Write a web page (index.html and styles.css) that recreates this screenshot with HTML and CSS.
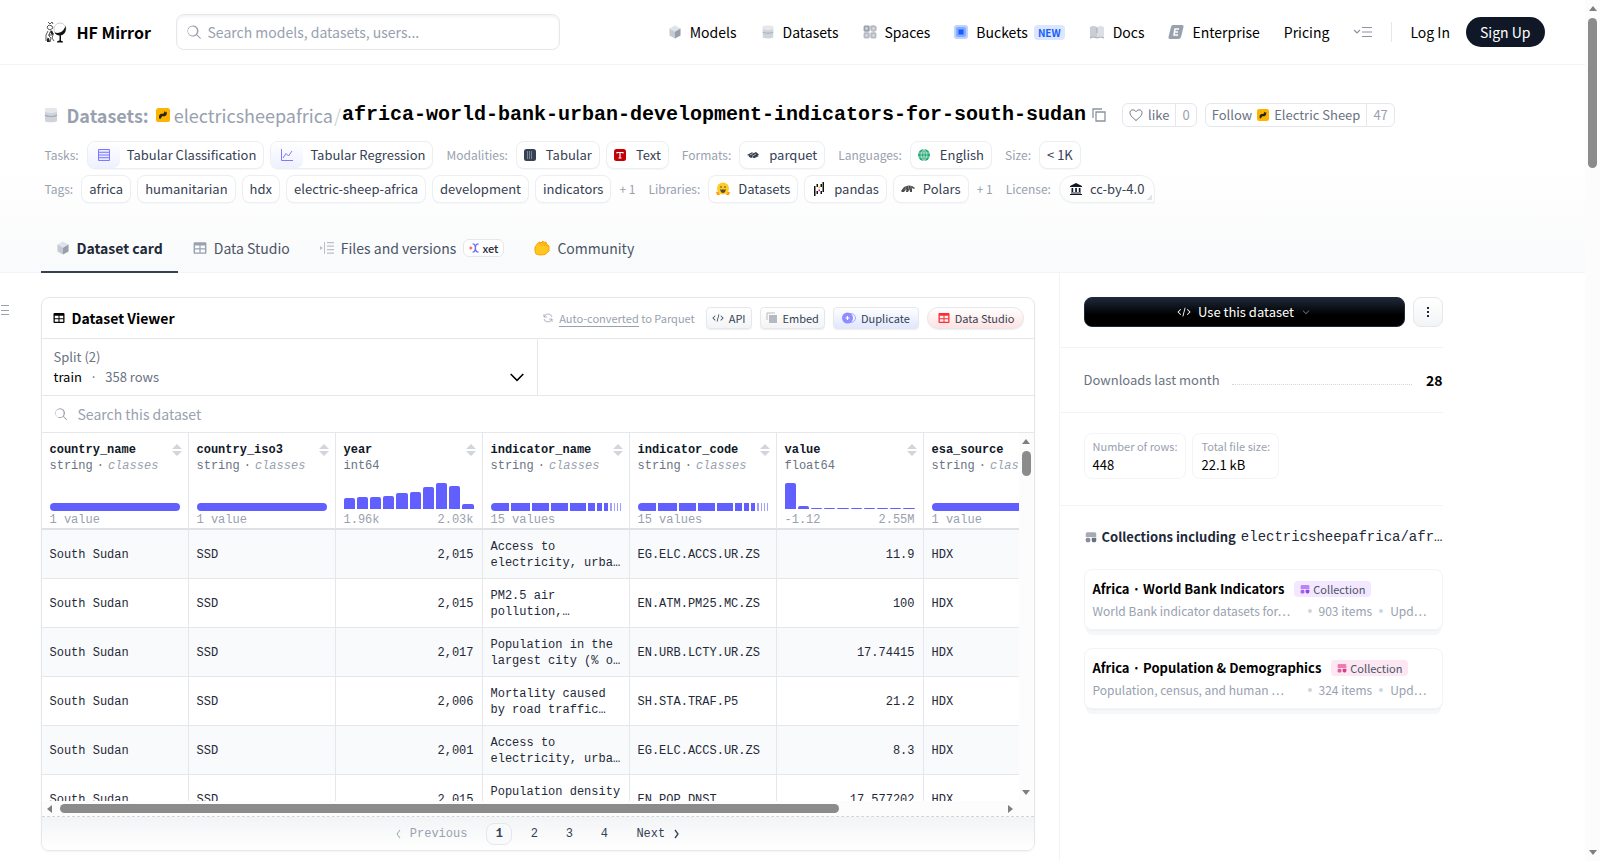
FILE: index.html
```
<!DOCTYPE html>
<html lang="en">
  <head>
    <meta charset="UTF-8" />
    <meta name="viewport" content="width=device-width, initial-scale=1.0" />
    <title>electricsheepafrica/africa-world-bank-urban-development-indicators-for-south-sudan</title>
    <link rel="stylesheet" href="styles.css">
  </head>
  <body>
    <svg class="sprite" aria-hidden="true">
      <symbol id="i-search" viewBox="0 0 32 32"><path d="M30 28.6 22.4 21a11 11 0 1 0-1.4 1.4l7.6 7.6ZM4 14a9 9 0 1 1 9 9 9 9 0 0 1-9-9Z" fill="currentColor" /></symbol>
      <symbol id="i-cube" viewBox="0 0 24 24"><path d="M12 1 21.500 6.200 12 11.600 2.500 6.200Z" fill="#dfe2e8" /><path d="M2.500 6.200 12 11.600V23L2.500 17.800Z" fill="#c5c9d1" /><path d="M21.500 6.200 12 11.600V23L21.500 17.800Z" fill="#979eac" /></symbol>
      <symbol id="i-db" viewBox="0 0 24 24"><path d="M3 3v18c0 1 4 2 9 2s9-1 9-2V3Z" fill="#cfd3da" /><path d="M3 7V3q0-2 9-2t9 2v4q-9 4-18 0Z" fill="#e5e7eb" /><path d="M3 12c3 3 15 3 18 0" fill="none" stroke="#a5abb7" stroke-width="1.800" /></symbol>
      <symbol id="i-spaces" viewBox="0 0 24 24"><rect x="1" y="1" width="10.500" height="10.500" rx="2.500" fill="#9aa1ae" /><circle cx="18" cy="6" r="5.500" fill="#b5bac4" /><rect x="12.500" y="1" width="5" height="5" fill="#b5bac4" /><rect x="1" y="12.500" width="10.500" height="10.500" rx="2.500" fill="#b5bac4" /><rect x="12.500" y="12.500" width="10.500" height="10.500" rx="2.500" fill="#b5bac4" /><path d="M4 4h4v4H4zM16 4h4v4h-4zM4 16h4v4H4zM16 16h4v4h-4z" fill="#d8dbe1" /></symbol>
      <symbol id="i-table" viewBox="0 0 24 24"><path d="M3 2h18a2 2 0 0 1 2 2v16a2 2 0 0 1-2 2H3a2 2 0 0 1-2-2V4a2 2 0 0 1 2-2ZM3.500 7.500v5H11v-5Zm9.500 0v5h7.500v-5Zm-9.500 7v5H11v-5Zm9.500 0v5h7.500v-5Z" fill="currentColor" fill-rule="evenodd" /></symbol>
      <symbol id="i-code" viewBox="0 0 32 32"><path d="m31 16-7 7-1.400-1.400L28.200 16l-5.600-5.600L24 9ZM1 16l7-7 1.400 1.400L3.800 16l5.600 5.600L8 23Zm11.400 9.500L17.600 6l2 .5-5.200 19.500Z" fill="currentColor" /></symbol>
      <symbol id="i-chev" viewBox="0 0 32 32"><path d="M16 23 5 12l1.800-1.800 9.200 9.200 9.200-9.200L27 12Z" fill="currentColor" /></symbol>
      <symbol id="i-sheep" viewBox="0 0 16 16"><rect width="16" height="16" rx="3" fill="#fbb400" /><path d="M3.500 12V8.500L5.500 6.500h3L10 3.500l1 1.500 1.500-1L12 8l-2 1.500h-3L5 12.500Z" fill="#2a2410" /></symbol>
      <symbol id="i-coll" viewBox="0 0 16 16"><path d="M1 3.500A2 2 0 0 1 3 1.500h10a2 2 0 0 1 2 2V8H1Z" fill="currentColor" opacity=".6" /><rect x="1" y="9" width="6" height="6" rx="2" fill="currentColor" opacity=".8" /><path d="M9 9h6v3.500a2.500 2.500 0 0 1-2.500 2.500h-1A2.500 2.500 0 0 1 9 12.500Z" fill="currentColor" /></symbol>
      <symbol id="i-sort" viewBox="0 0 10 12"><path d="M5 0 10 5H0ZM5 12 0 7h10Z" fill="#d1d5dc" /></symbol>
    </svg>

    <div class="window">
      <div class="page">
        <header class="topbar">
          <div class="topbar-inner">
            <a class="brand" href="#">
              <svg class="logo" viewBox="0 0 22 22"><path d="M3 1l2 2 2-2 1 2M2 6l2-2 3 1 1 2-3 2-2-1ZM3 10l-2 4v6M5 11l-1 4 2 2-1 4M7 10l1 4-1 3 2 3M3 14h4M2 17l2 1" fill="none" stroke="#444" stroke-width=".9" /><path d="m6 9 3 4-2 1-2-3ZM2 18l2-1 1 4H2Z" fill="#222" /><circle cx="15" cy="8" r="6" fill="#fff" stroke="#b5b5b5" stroke-width=".7" /><path d="M20.500 5c1.500 5-1.500 9.500-5.500 9.500-3 0-5-1.500-5.500-3 5 1.500 9-1 11-6.500ZM14.500 14h1.500v6h-1.500ZM12 20.500l3-1.500 3 1.500v1h-6Z" fill="#111" /></svg>
              HF Mirror
            </a>
            <form class="search">
              <svg class="ic16"><use href="#i-search" /></svg>
              <input type="text" aria-label="Search" placeholder="Search models, datasets, users..." />
            </form>
            <nav class="nav">
              <a href="#"><svg class="ic14"><use href="#i-cube" /></svg>Models</a>
              <a href="#"><svg class="ic14"><use href="#i-db" /></svg>Datasets</a>
              <a href="#"><svg class="ic14"><use href="#i-spaces" /></svg>Spaces</a>
              <a href="#"><svg class="ic14" viewBox="0 0 14 14"><rect width="14" height="14" rx="3" fill="#bfd3ff" /><rect x="2" y="2" width="10" height="10" rx="2" fill="#84aaff" /><rect x="5" y="5" width="4" height="4" fill="#155dfc" stroke="#155dfc" /></svg>Buckets <span class="new">NEW</span></a>
              <a href="#"><svg class="ic16" viewBox="0 0 16 16"><path d="M1 3q3.500-2 7 0v11q-3.500-2-7 0Z" fill="#c9cdd4" /><path d="M8 3q3.500-2 7 0v11q-3.500-2-7 0Z" fill="#dcdfe4" /><path d="M1 14q3.500-2 7 0 3.500-2 7 0M8 4v5" fill="none" stroke="#a3a9b5" /></svg>Docs</a>
              <a href="#"><svg class="ic16" viewBox="0 0 16 14"><path d="M5 0h9q2 0 1.500 2l-2.500 10q-.5 2-2.500 2H2q-2 0-1.500-2L3 2q.5-2 2-2Z" fill="#99a1af" /><path d="M11 4H7L6 10h4M6.500 7h3.500" fill="none" stroke="#fff" stroke-width="1.500" /></svg>Enterprise</a>
              <a href="#">Pricing</a>
              <button class="more" aria-label="More"><svg width="20" height="12" viewBox="0 0 20 12"><path d="m1 4 3 3 3-3M9 1.500h10M9 6h10M9 10.500h10" fill="none" stroke="#8a92a3" stroke-width="1.200" /></svg></button>
              <span class="rule"></span>
              <a href="#">Log In</a>
              <a class="signup" href="#">Sign Up</a>
            </nav>
          </div>
        </header>

        <section class="hero">
          <div class="wrap">
            <h1 class="title">
              <svg class="ic16"><use href="#i-db" /></svg>
              <span class="kind">Datasets:</span>
              <a class="owner" href="#"><svg class="ic14"><use href="#i-sheep" /></svg>electricsheepafrica</a>
              <span class="slash">/</span>
              <a class="name" href="#">africa-world-bank-urban-development-indicators-for-south-sudan</a>
              <button class="copy" aria-label="Copy name"><svg class="ic14" viewBox="0 0 14 14"><path d="M4 4h9v9H4ZM1 10V1h9" fill="none" stroke="#8a92a0" stroke-width="1.300" /></svg></button>
              <span class="pair"><button><svg class="ic14" viewBox="0 0 14 14"><path d="M7 12.500C4 10 1 7.500 1 4.700 1 1.500 5 .8 7 3.700 9 .8 13 1.500 13 4.700 13 7.500 10 10 7 12.500Z" fill="none" stroke="#6a7282" /></svg>like</button><button class="count">0</button></span>
              <span class="pair"><button>Follow <svg class="ic12"><use href="#i-sheep" /></svg>Electric Sheep</button><button class="count">47</button></span>
            </h1>

            <div class="tags">
              <span class="label">Tasks:</span>
              <a class="tag task" href="#"><span class="tile"><svg class="ic12" viewBox="0 0 12 12"><path d="M.5.5h11v11H.5ZM1 3.300h10M1 6h10M1 8.700h10" fill="#e8e8ff" stroke="#7c78ff" /></svg></span>Tabular Classification</a>
              <a class="tag task" href="#"><span class="tile"><svg class="ic12" viewBox="0 0 12 12"><path d="M.5 0v11.500H12M2 9l3-4.500L7.500 7 11 2" fill="none" stroke="#7c78ff" /></svg></span>Tabular Regression</a>
              <span class="label gap">Modalities:</span>
              <a class="tag" href="#"><svg class="ic12" viewBox="0 0 12 12"><rect width="12" height="12" rx="2.500" fill="#364153" /><path d="M3 3h6M3 5h6M3 7h6M3 9h6" stroke="#c2c8d2" stroke-dasharray="1 1" /></svg>Tabular</a>
              <a class="tag" href="#"><svg class="ic12" viewBox="0 0 12 12"><rect width="12" height="12" rx="2.500" fill="#c10007" /><path d="M3 4.500v-1h6v1M6 3.500V9M4.500 9h3" fill="none" stroke="#fff" stroke-width="1.200" /></svg>Text</a>
              <span class="label gap">Formats:</span>
              <a class="tag" href="#"><svg class="ic12" viewBox="0 0 12 12"><path d="m0 6 5-2.700L6.500 4.200 9 3l3 2.500-1.500 1L12 7 7 9.200 5.500 8.300 4 9 1.500 7.500 2.500 7Z" fill="#364153" /><path d="m3 6 3-1.500M5 7.500 9 5" stroke="#fff" stroke-width=".6" /></svg>parquet</a>
              <span class="label gap">Languages:</span>
              <a class="tag" href="#"><svg class="ic12" viewBox="0 0 12 12"><circle cx="6" cy="6" r="6" fill="#27a577" /><path d="M0 4h12M0 8h12M6 0v12M6 0Q0 6 6 12Q12 6 6 0" fill="none" stroke="#d3f3e4" stroke-width=".7" /></svg>English</a>
              <span class="label gap">Size:</span>
              <a class="tag" href="#">&lt; 1K</a>
            </div>
            <div class="tags">
              <span class="label">Tags:</span>
              <a class="tag" href="#">africa</a>
              <a class="tag" href="#">humanitarian</a>
              <a class="tag" href="#">hdx</a>
              <a class="tag" href="#">electric-sheep-africa</a>
              <a class="tag" href="#">development</a>
              <a class="tag" href="#">indicators</a>
              <button class="plus">+ 1</button>
              <span class="label gap">Libraries:</span>
              <a class="tag lib" href="#"><svg class="ic14" viewBox="0 0 14 14"><circle cx="7" cy="6.500" r="6" fill="#ffcc22" /><path d="M0 10q3-1 4 3H1ZM14 10q-3-1-4 3h3Z" fill="#ff9d0b" /><path d="M4 7.500h6Q9 11 7 11T4 7.500M4 4.500h2v1H4zM8 4.500h2v1H8z" fill="#5a4a3a" /></svg>Datasets</a>
              <a class="tag lib" href="#"><svg class="ic14" viewBox="0 0 14 14"><path d="M2 4h1.500v10H2zM4.500 2H6v3H4.500zM4.500 9H6v3H4.500zM10.500 0H12v10h-1.500zM8.500 2H10v3H8.500zM8.500 9H10v3H8.500z" fill="#111" /><path d="M6.500 4.500H8v1.800H6.500z" fill="#ffca00" /><path d="M6.500 7.500H8v1.800H6.500z" fill="#e70488" /></svg>pandas</a>
              <a class="tag lib" href="#"><svg class="ic14" viewBox="0 0 14 10"><path d="M0 7 3 3q4-2.500 8-1l3 2-1 1-2-1v4h-2l-.5-3L7 8H5l.5-3L3 8H1Z" fill="#4b4b4b" /><path d="M5 2 4 6M7.500 2v3M10 2v3" stroke="#bbb" stroke-width=".5" /></svg>Polars</a>
              <button class="plus">+ 1</button>
              <span class="label gap">License:</span>
              <a class="tag license" href="#"><svg class="ic12" viewBox="0 0 12 12"><path d="M0 3 6 0l6 3v1H0ZM1.500 5h1.700v4H1.500zM5.200 5h1.700v4H5.200zM8.800 5h1.700v4H8.800zM1 9.500h10v1H1zM0 11h12v1H0z" fill="#101828" /></svg>cc-by-4.0</a>
            </div>

            <nav class="tabs">
              <a class="tab active" href="#"><svg class="ic14"><use href="#i-cube" /></svg>Dataset card</a>
              <a class="tab" href="#"><svg class="ic14 dim"><use href="#i-table" /></svg>Data Studio</a>
              <a class="tab" href="#"><svg class="ic14" viewBox="0 0 14 12"><path d="m0 4 3 2-3 2ZM4 0h1v12H4zM7 0h7v1.300H7zM7 3.500h7v1.300H7zM7 7h7v1.300H7zM7 10.500h7v1.300H7z" fill="#b9bec8" /></svg>Files and versions <span class="xet"><svg class="ic10" viewBox="0 0 11 11"><path d="M4 1q3 0 3 4.500T10.500 10M10.500 1Q7 1 7 5.500T4 10" fill="none" stroke="#6d6cff" stroke-width="1.500" /><path d="M0 5.500 2 3.500l2 2-2 2Z" fill="#ff6b3d" /></svg>xet</span></a>
              <a class="tab" href="#"><svg class="ic16" viewBox="0 0 16 16"><path d="M1 11 1 7l3-4 2-1 1 1 2-2 1 1.500 2-.5.500 2L15 6v5l-4 3.500-5 .5-4-1Z" fill="#ffc71f" stroke="#ff9f0a" stroke-linejoin="round" /><path d="M5 3l3.500 3M8 2l3 4M11 3l2 3.500" stroke="#ff9f0a" /></svg>Community</a>
            </nav>
          </div>
        </section>

        <div class="wrap main">
          <button class="toc" aria-label="Contents"></button>
          <main class="content">
            <section class="viewer">
              <div class="viewer-head">
                <h2><svg class="ic12"><use href="#i-table" /></svg>Dataset Viewer</h2>
                <span class="auto"><svg class="ic10" viewBox="0 0 10 10"><path d="M9 4A4 4 0 0 0 2 2.500L1 4M1 1v3h3M1 6a4 4 0 0 0 7 1.500L9 6M9 9V6H6" fill="none" stroke="#99a1af" stroke-width=".8" /></svg><span><a href="#">Auto-converted</a> to Parquet</span></span>
                <button class="act"><svg class="ic12"><use href="#i-code" /></svg>API</button>
                <button class="act"><svg class="ic12" viewBox="0 0 12 12"><path d="M3 3h8v8H3Z" fill="#b5b9c0" /><path d="M1 8V1h8" fill="none" stroke="#b5b9c0" /></svg>Embed</button>
                <button class="act blue"><svg class="ic14" viewBox="0 0 14 14"><circle cx="9" cy="7" r="4.500" fill="none" stroke="#aaa8ff" /><circle cx="5.500" cy="7" r="5.500" fill="#8f8cff" /><path d="M3.500 7h4M5.500 5v4" stroke="#fff" stroke-width="1.200" /></svg>Duplicate</button>
                <a class="act red" href="#"><svg class="ic12"><use href="#i-table" /></svg>Data Studio</a>
              </div>
              <div class="split">
                <button class="split-btn">
                  <span>Split (2)</span>
                  <span class="split-row"><b>train</b><i>·</i>358 rows<svg class="ic20"><use href="#i-chev" /></svg></span>
                </button>
              </div>
              <form class="find">
                <svg class="ic14"><use href="#i-search" /></svg>
                <input type="text" aria-label="Search this dataset" placeholder="Search this dataset" />
              </form>
              <div class="grid">
                <div class="grid-view">
                  <table>
                    <thead>
                      <tr>
                        <th><div class="col">country_name<svg><use href="#i-sort" /></svg></div><div class="type">string <span>·</span> <em>classes</em></div><div class="chart"><span class="bar"></span></div><div class="range">1 value</div></th>
                        <th><div class="col">country_iso3<svg><use href="#i-sort" /></svg></div><div class="type">string <span>·</span> <em>classes</em></div><div class="chart"><span class="bar"></span></div><div class="range">1 value</div></th>
                        <th><div class="col">year<svg><use href="#i-sort" /></svg></div><div class="type">int64</div><div class="chart hist"><i style="height:11px"></i><i style="height:12px"></i><i style="height:12px"></i><i style="height:13px"></i><i style="height:16px"></i><i style="height:17px"></i><i style="height:22px"></i><i style="height:26px"></i><i style="height:23px"></i><i style="height:5px"></i></div><div class="range">1.96k<span>2.03k</span></div></th>
                        <th><div class="col">indicator_name<svg><use href="#i-sort" /></svg></div><div class="type">string <span>·</span> <em>classes</em></div><div class="chart segs"><i style="width:19px"></i><i style="width:19px"></i><i style="width:17px"></i><i style="width:17px"></i><i style="width:16px"></i><i style="width:7px"></i><i style="width:5px"></i><i style="width:4px"></i><i style="width:2px"></i><i style="width:1px"></i><i style="width:1px"></i><i style="width:1px"></i></div><div class="range">15 values</div></th>
                        <th><div class="col">indicator_code<svg><use href="#i-sort" /></svg></div><div class="type">string <span>·</span> <em>classes</em></div><div class="chart segs"><i style="width:19px"></i><i style="width:19px"></i><i style="width:17px"></i><i style="width:17px"></i><i style="width:16px"></i><i style="width:7px"></i><i style="width:5px"></i><i style="width:4px"></i><i style="width:2px"></i><i style="width:1px"></i><i style="width:1px"></i><i style="width:1px"></i></div><div class="range">15 values</div></th>
                        <th><div class="col">value<svg><use href="#i-sort" /></svg></div><div class="type">float64</div><div class="chart hist"><i style="height:26px"></i><i style="height:3px"></i><i style="height:1px"></i><i style="height:1px"></i><i style="height:1px"></i><i style="height:1px"></i><i style="height:1px"></i><i style="height:1px"></i><i style="height:1px"></i><i style="height:1px"></i></div><div class="range">-1.12<span>2.55M</span></div></th>
                        <th><div class="col">esa_source<svg><use href="#i-sort" /></svg></div><div class="type">string <span>·</span> <em>classes</em></div><div class="chart"><span class="bar"></span></div><div class="range">1 value</div></th>
                      </tr>
                    </thead>
                    <tbody>
                      <tr><td>South Sudan</td><td>SSD</td><td class="num">2,015</td><td>Access to<br />electricity, urba…</td><td>EG.ELC.ACCS.UR.ZS</td><td class="num">11.9</td><td>HDX</td></tr>
                      <tr><td>South Sudan</td><td>SSD</td><td class="num">2,015</td><td>PM2.5 air<br />pollution,…</td><td>EN.ATM.PM25.MC.ZS</td><td class="num">100</td><td>HDX</td></tr>
                      <tr><td>South Sudan</td><td>SSD</td><td class="num">2,017</td><td>Population in the<br />largest city (% o…</td><td>EN.URB.LCTY.UR.ZS</td><td class="num">17.74415</td><td>HDX</td></tr>
                      <tr><td>South Sudan</td><td>SSD</td><td class="num">2,006</td><td>Mortality caused<br />by road traffic…</td><td>SH.STA.TRAF.P5</td><td class="num">21.2</td><td>HDX</td></tr>
                      <tr><td>South Sudan</td><td>SSD</td><td class="num">2,001</td><td>Access to<br />electricity, urba…</td><td>EG.ELC.ACCS.UR.ZS</td><td class="num">8.3</td><td>HDX</td></tr>
                      <tr><td>South Sudan</td><td>SSD</td><td class="num">2,015</td><td>Population density<br />&nbsp;</td><td>EN.POP.DNST</td><td class="num">17.577202</td><td>HDX</td></tr>
                    </tbody>
                  </table>
                </div>
                <div class="sb sb-y" aria-hidden="true"><i class="up"></i><b></b><i class="down"></i></div>
                <div class="sb sb-x" aria-hidden="true"><i class="left"></i><b></b><i class="right"></i></div>
              </div>
              <nav class="pager">
                <a class="prev" href="#"><svg class="ic10" viewBox="0 0 10 10"><path d="M6 1 3 5l3 4" fill="none" stroke="currentColor" /></svg>Previous</a>
                <a class="num-link on" href="#">1</a>
                <a class="num-link" href="#">2</a>
                <a class="num-link" href="#">3</a>
                <a class="num-link" href="#">4</a>
                <a class="next" href="#">Next<svg class="ic10" viewBox="0 0 10 10"><path d="m4 1 3 4-3 4" fill="none" stroke="currentColor" stroke-width="1.300" /></svg></a>
              </nav>
            </section>
          </main>

          <aside class="side">
            <div class="block use">
              <button class="use-btn"><svg class="ic14"><use href="#i-code" /></svg>Use this dataset<svg class="ic10 faint"><use href="#i-chev" /></svg></button>
              <button class="kebab" aria-label="Options"><svg width="4" height="12" viewBox="0 0 4 12"><path d="M1 1h2v2H1zM1 5h2v2H1zM1 9h2v2H1z" fill="#1e2939" /></svg></button>
            </div>
            <div class="block downloads"><span>Downloads last month</span><i></i><b>28</b></div>
            <div class="block stats">
              <a class="stat" href="#"><span>Number of rows:</span>448</a>
              <a class="stat" href="#"><span>Total file size:</span>22.1 kB</a>
            </div>
            <div class="block colls">
              <h2><svg class="ic12"><use href="#i-coll" /></svg>Collections including <span>electricsheepafrica/afr…</span></h2>
              <a class="card" href="#">
                <span class="card-title">Africa · World Bank Indicators <span class="pill violet"><svg class="ic10"><use href="#i-coll" /></svg>Collection</span></span>
                <span class="card-meta"><span class="desc">World Bank indicator datasets for…</span><i></i>903 items<i></i>Upd…</span>
              </a>
              <a class="card" href="#">
                <span class="card-title">Africa · Population &amp; Demographics <span class="pill pink"><svg class="ic10"><use href="#i-coll" /></svg>Collection</span></span>
                <span class="card-meta"><span class="desc">Population, census, and human …</span><i></i>324 items<i></i>Upd…</span>
              </a>
            </div>
          </aside>
        </div>
      </div>
      <div class="sb sb-y sb-page" aria-hidden="true"><i class="up"></i><b></b><i class="down"></i></div>
    </div>
  </body>
</html>
```
FILE: styles.css
```
* {
  box-sizing: border-box;
}

body {
  margin: 0;
  background: #fff;
  color: #000;
  font-family: "Noto Sans CJK KR", "Noto Sans", sans-serif;
  font-size: 14px;
  line-height: 24px;
}

a {
  color: inherit;
  text-decoration: none;
}

button,
input {
  font: inherit;
  color: inherit;
  background: none;
  border: 0;
  padding: 0;
  margin: 0;
}

h1,
h2 {
  margin: 0;
}

svg {
  flex: none;
  display: block;
}

.sprite {
  position: absolute;
  width: 0;
  height: 0;
}

.ic10 { width: 10px; height: 10px; }
.ic12 { width: 12px; height: 12px; }
.ic14 { width: 14px; height: 14px; }
.ic16 { width: 16px; height: 16px; }
.ic20 { width: 20px; height: 20px; }

.window {
  display: flex;
  height: 100vh;
  overflow: hidden;
}

.page {
  flex: 1;
  min-width: 0;
}

.wrap,
.topbar-inner {
  max-width: 1536px;
  margin: 0 auto;
  padding: 0 16px;
}

/* top bar */
.topbar {
  border-bottom: 1px solid #f3f4f6;
}

.topbar-inner {
  display: flex;
  align-items: center;
  height: 64px;
}

.brand {
  display: flex;
  align-items: center;
  gap: 10px;
  padding-left: 4px;
  width: 135px;
  font-size: 16px;
  font-weight: 700;
  white-space: nowrap;
}

.logo {
  width: 22px;
  height: 22px;
}

.search {
  display: flex;
  align-items: center;
  gap: 6px;
  width: 384px;
  height: 36px;
  padding: 0 9px;
  border: 1px solid #e5e7eb;
  border-radius: 8px;
  box-shadow: inset 0 2px 3px #f3f4f6;
  color: #99a1af;
}

.search input,
.find input {
  flex: 1;
  min-width: 0;
  outline: 0;
}

::placeholder {
  color: #99a1af;
  opacity: 1;
}

.nav {
  display: flex;
  flex: 1;
  align-items: center;
  justify-content: flex-end;
  gap: 24px;
  white-space: nowrap;
}

.nav a {
  display: flex;
  align-items: center;
  gap: 8px;
}

.new {
  margin-left: -2px;
  padding: 0 4px;
  border-radius: 4px;
  background: #dbe6ff;
  color: #155dfc;
  font-size: 10px;
  font-weight: 700;
  line-height: 15px;
}

.rule {
  width: 1px;
  height: 20px;
  background: #e5e7eb;
  margin: 0 -6px;
}

.nav .signup {
  height: 30px;
  margin-left: -8px;
  padding: 0 14px;
  border-radius: 15px;
  background: #101828;
  color: #fff;
}

/* title, tags, tabs */
.hero {
  padding-top: 36px;
  border-bottom: 1px solid #f3f4f6;
  background: linear-gradient(#fff 50%, #f9fafb);
}

.title {
  display: flex;
  align-items: center;
  height: 28px;
  margin-bottom: 12px;
  padding-left: 2px;
  font-size: 18px;
  font-weight: 400;
  white-space: nowrap;
}

.kind {
  margin: 0 7px 0 8px;
  color: #99a1af;
  font-weight: 600;
}

.owner {
  display: flex;
  align-items: center;
  gap: 4px;
  color: #99a1af;
}

.slash {
  margin: 0 1px;
  color: #d1d5dc;
}

.name {
  font-family: "Liberation Mono", monospace;
  font-size: 20px;
  font-weight: 700;
}

.copy {
  margin: 0 16px 0 6px;
}

.pair {
  display: flex;
  height: 24px;
  margin-right: 8px;
  border: 1px solid #e5e7eb;
  border-radius: 6px;
  color: #6a7282;
  font-size: 13px;
  line-height: 22px;
}

.pair button {
  display: flex;
  align-items: center;
  gap: 5px;
  padding: 0 6px;
}

.pair .count {
  border-left: 1px solid #e5e7eb;
  color: #99a1af;
}

.tags {
  display: flex;
  align-items: center;
  gap: 6px;
  height: 28px;
  margin-bottom: 6px;
  padding-left: 4px;
  font-size: 13px;
  white-space: nowrap;
}

.label,
.plus {
  color: #99a1af;
  font-size: 12px;
}

.label {
  margin-right: 2px;
}

.plus {
  margin-left: 2px;
}

.gap {
  margin-left: 7px;
}

.tag {
  display: flex;
  align-items: center;
  gap: 10px;
  height: 28px;
  padding: 0 7px;
  border: 1px solid #eceef1;
  border-radius: 8px;
  background: #fff;
  color: #364153;
  box-shadow: 0 1px 1px #f6f7f8;
}

.task {
  gap: 7px;
  padding-left: 0;
}

.lib {
  gap: 8px;
}

.tile {
  display: flex;
  align-items: center;
  justify-content: center;
  width: 32px;
  height: 26px;
  border-radius: 7px;
  background: linear-gradient(#fff, #eef0ff);
}

.license {
  gap: 8px;
  border-radius: 14px 14px 0 14px;
  padding: 0 10px;
  background: linear-gradient(135deg, transparent 50%, #dfe2e6 50%) no-repeat right 2px bottom 2px / 6px 6px;
}

.tabs {
  display: flex;
  height: 48px;
  margin-top: 22px;
  margin-bottom: -1px;
}

.tab {
  display: flex;
  align-items: center;
  gap: 7px;
  padding: 0 15px;
  border-bottom: 2px solid transparent;
  color: #4a5565;
  white-space: nowrap;
}

.tab.active {
  border-color: #364153;
  color: #1e2939;
  font-weight: 600;
}

.dim {
  color: #99a1af;
}

.xet {
  display: flex;
  align-items: center;
  gap: 3px;
  height: 18px;
  padding: 0 5px;
  border: 1px solid #e5e7eb;
  border-radius: 6px;
  background: #fff;
  color: #1e2939;
  font-size: 11px;
  font-weight: 500;
}

/* two columns */
.main {
  display: flex;
  position: relative;
}

.toc {
  position: absolute;
  top: 32px;
  left: -24px;
  width: 8px;
  height: 10px;
  border-top: 1px solid #99a1af;
  border-bottom: 1px solid #99a1af;
  background: linear-gradient(#99a1af, #99a1af) no-repeat center / 100% 1px;
}

.content {
  flex: 1;
  min-width: 0;
  padding: 24px 24px 0 0;
}

.viewer {
  border: 1px solid #e5e7eb;
  border-radius: 8px;
  box-shadow: 0 1px 2px #f3f4f6;
  overflow: hidden;
}

.viewer-head {
  display: flex;
  align-items: center;
  height: 41px;
  padding: 0 10px 0 11px;
  border-bottom: 1px solid #e5e7eb;
  font-size: 11px;
}

.viewer h2 {
  display: flex;
  align-items: center;
  gap: 7px;
  margin-right: auto;
  font-size: 14px;
  font-weight: 600;
}

.auto {
  display: flex;
  gap: 6px;
  align-items: center;
  margin-right: 3px;
  color: #99a1af;
}

.auto a {
  border-bottom: 1px solid #99a1af;
}

.act {
  display: flex;
  align-items: center;
  gap: 5px;
  height: 22px;
  margin-left: 8px;
  padding: 0 5px;
  border: 1px solid #e5e7eb;
  border-radius: 4px;
  background: linear-gradient(#fff, #f3f4f6);
  box-shadow: 0 1px 1px #eee;
  color: #364153;
}

.blue {
  padding: 0 8px;
  background: linear-gradient(#fff, #e0e7ff);
}

.red {
  padding: 0 8px 0 10px;
  border-radius: 11px;
  background: linear-gradient(#fff, #ffe2e2);
}

.red svg {
  color: #fb2c36;
}

.split {
  height: 57px;
  border-bottom: 1px solid #e5e7eb;
}

.split-btn {
  width: 50%;
  height: 56px;
  padding: 0 12px;
  border-right: 1px solid #e5e7eb;
  color: #6a7282;
  font-size: 13px;
  line-height: 20px;
  text-align: left;
}

.split-btn span {
  display: block;
}

.split-btn .split-row {
  display: flex;
  align-items: center;
}

.split-row b {
  color: #000;
  font-weight: 400;
}

.split-row i {
  margin: 0 8px;
  font-style: normal;
}

.split-row svg {
  margin-left: auto;
  margin-right: -2px;
  color: #000;
}

.find {
  display: flex;
  align-items: center;
  gap: 10px;
  height: 37px;
  padding: 0 12px;
  border-bottom: 1px solid #e5e7eb;
  color: #99a1af;
}

.grid {
  display: grid;
  grid-template-columns: minmax(0, 1fr) 15px;
  background: #fcfcfc;
}

.grid-view {
  height: 368px;
  overflow: hidden;
  background: #fff;
  font-family: "Liberation Mono", monospace;
  font-size: 12px;
  line-height: 16px;
}

.grid-view table {
  width: 1029px;
  table-layout: fixed;
  border-collapse: separate;
  border-spacing: 0;
}

.grid-view th,
.grid-view td {
  border-right: 1px solid #e5e7eb;
  border-bottom: 1px solid #e5e7eb;
}

.grid-view th {
  height: 97px;
  padding: 9px 8px 0;
  border-bottom: 2px solid #dfe1e5;
  font-weight: 400;
  text-align: left;
  vertical-align: top;
}

.grid-view td {
  height: 49px;
  padding: 2px 8px 0;
  color: #1e2939;
  white-space: nowrap;
}

.grid-view .num {
  text-align: right;
}

tbody tr:nth-child(odd) {
  background: #f9fafb;
}

.col {
  display: flex;
  align-items: center;
  justify-content: space-between;
  color: #101828;
  font-weight: 700;
}

.col svg {
  width: 10px;
  height: 12px;
  margin-right: -2px;
}

.type {
  display: flex;
  gap: 4px;
  color: #6a7282;
  white-space: nowrap;
}

.type em {
  color: #99a1af;
}

.chart {
  display: flex;
  align-items: flex-end;
  height: 37px;
}

.bar {
  width: 100%;
  height: 8px;
  border-radius: 4px;
  background: #615fff;
}

.hist {
  gap: 2px;
  height: 35px;
  margin-bottom: 2px;
}

.hist i {
  flex: 1;
  border-radius: 2px 2px 0 0;
  background: #615fff;
}

.segs {
  gap: 2px;
}

.segs i {
  height: 8px;
  background: #615fff;
}

.segs i:first-child {
  border-radius: 4px 0 0 4px;
}

.segs i:nth-child(n + 9) {
  opacity: 0.6;
}

.range {
  display: flex;
  justify-content: space-between;
  padding-top: 1px;
  color: #99a1af;
}

/* scrollbars */
.sb {
  display: flex;
  align-items: center;
  justify-content: space-between;
  background: #fcfcfc;
}

.sb b {
  border-radius: 5px;
  background: #8b8b8b;
}

.sb i {
  border: 4px solid transparent;
}

.sb-y {
  flex-direction: column;
  width: 15px;
  padding: 2px 0;
}

.sb-y b {
  width: 9px;
  height: 25px;
  margin: 7px 0 auto;
}

.sb-y .up {
  border-bottom: 5px solid #7f7f7f;
}

.sb-y .down {
  border-top: 5px solid #7f7f7f;
}

.sb-x {
  height: 15px;
  padding: 0 2px 0 1px;
}

.sb-x b {
  width: 80%;
  height: 9px;
  margin: 0 auto 0 8px;
}

.sb-x .left {
  border-right: 5px solid #7f7f7f;
}

.sb-x .right {
  border-left: 5px solid #7f7f7f;
}

.sb-page b {
  height: 150px;
}

.pager {
  display: flex;
  align-items: center;
  justify-content: center;
  gap: 9px;
  height: 34px;
  border-top: 1px dashed #d1d5dc;
  background: linear-gradient(#f3f4f6, #fff);
  color: #364153;
  font-family: "Liberation Mono", monospace;
  font-size: 12px;
}

.pager a {
  display: flex;
  align-items: center;
  justify-content: center;
  gap: 6px;
}

.pager .num-link {
  width: 26px;
  height: 22px;
  border-radius: 8px;
}

.pager .on {
  border: 1px solid #e5e7eb;
  background: #f9fafb;
  font-weight: 700;
}

.pager .prev {
  margin-right: 10px;
  color: #99a1af;
}

.pager .next {
  margin-left: 10px;
}

/* sidebar */
.side {
  width: 486px;
  min-height: 600px;
  padding-right: 102px;
  border-left: 1px solid #f3f4f6;
}

.block {
  padding-left: 24px;
  border-bottom: 1px solid #f3f4f6;
}

.use {
  display: flex;
  gap: 8px;
  padding-top: 24px;
  padding-bottom: 20px;
}

.use-btn {
  display: flex;
  flex: 1;
  align-items: center;
  justify-content: center;
  gap: 7px;
  height: 30px;
  border: 1px solid #1e2939;
  border-radius: 8px;
  background: linear-gradient(#1e2939, #000 60%);
  color: #fff;
  font-size: 13px;
}

.faint {
  color: #6a7282;
}

.kebab {
  display: flex;
  align-items: center;
  justify-content: center;
  width: 30px;
  height: 30px;
  border: 1px solid #e5e7eb;
  border-radius: 8px;
  background: linear-gradient(#fff, #f3f4f6);
}

.downloads {
  display: flex;
  align-items: center;
  height: 65px;
  color: #6a7282;
  font-size: 13px;
}

.downloads i {
  flex: 1;
  height: 9px;
  margin: 0 14px 0 12px;
  border-bottom: 1px dotted #d1d5dc;
}

.downloads b {
  color: #000;
  font-size: 14px;
}

.stats {
  display: flex;
  gap: 6px;
  padding-top: 20px;
  padding-bottom: 26px;
}

.stat {
  height: 46px;
  padding: 4px 8px;
  border: 1px solid #f3f4f6;
  border-radius: 8px;
  font-size: 13px;
  line-height: 19px;
}

.stat span {
  display: block;
  color: #99a1af;
  font-size: 11px;
  line-height: 17px;
}

.colls {
  padding-top: 19px;
  border-bottom: 0;
}

.colls h2 {
  display: flex;
  align-items: center;
  gap: 5px;
  margin-bottom: 20px;
  padding-left: 1px;
  color: #1e2939;
  font-size: 13px;
  font-weight: 600;
  white-space: nowrap;
}

.colls h2 svg {
  color: #6a7282;
}

.colls h2 span {
  font-family: "Liberation Mono", monospace;
  font-size: 14px;
  font-weight: 400;
}

.card {
  display: block;
  height: 61px;
  margin-bottom: 18px;
  padding: 8px;
  border: 1px solid #f3f4f6;
  border-radius: 8px;
  box-shadow: 0 1px 1px #eef0f2, 0 7px 0 -2px #f6f7f9;
  line-height: 22px;
  white-space: nowrap;
}

.card-title {
  display: flex;
  align-items: center;
  gap: 10px;
  font-size: 13px;
  font-weight: 600;
}

.pill {
  display: flex;
  align-items: center;
  gap: 3px;
  padding: 0 6px;
  border-radius: 4px;
  color: #4a5565;
  font-size: 11px;
  font-weight: 400;
  line-height: 16px;
}

.violet {
  background: #f3e8ff;
}

.violet svg {
  color: #9142f5;
}

.pink {
  background: #fce7f3;
}

.pink svg {
  color: #dd3a82;
}

.card-meta {
  display: flex;
  align-items: center;
  color: #99a1af;
  font-size: 12px;
}

.desc {
  width: 208px;
}

.card-meta i {
  width: 4px;
  height: 4px;
  margin: 0 7px;
  border-radius: 2px;
  background: #d1d5dc;
}
```
